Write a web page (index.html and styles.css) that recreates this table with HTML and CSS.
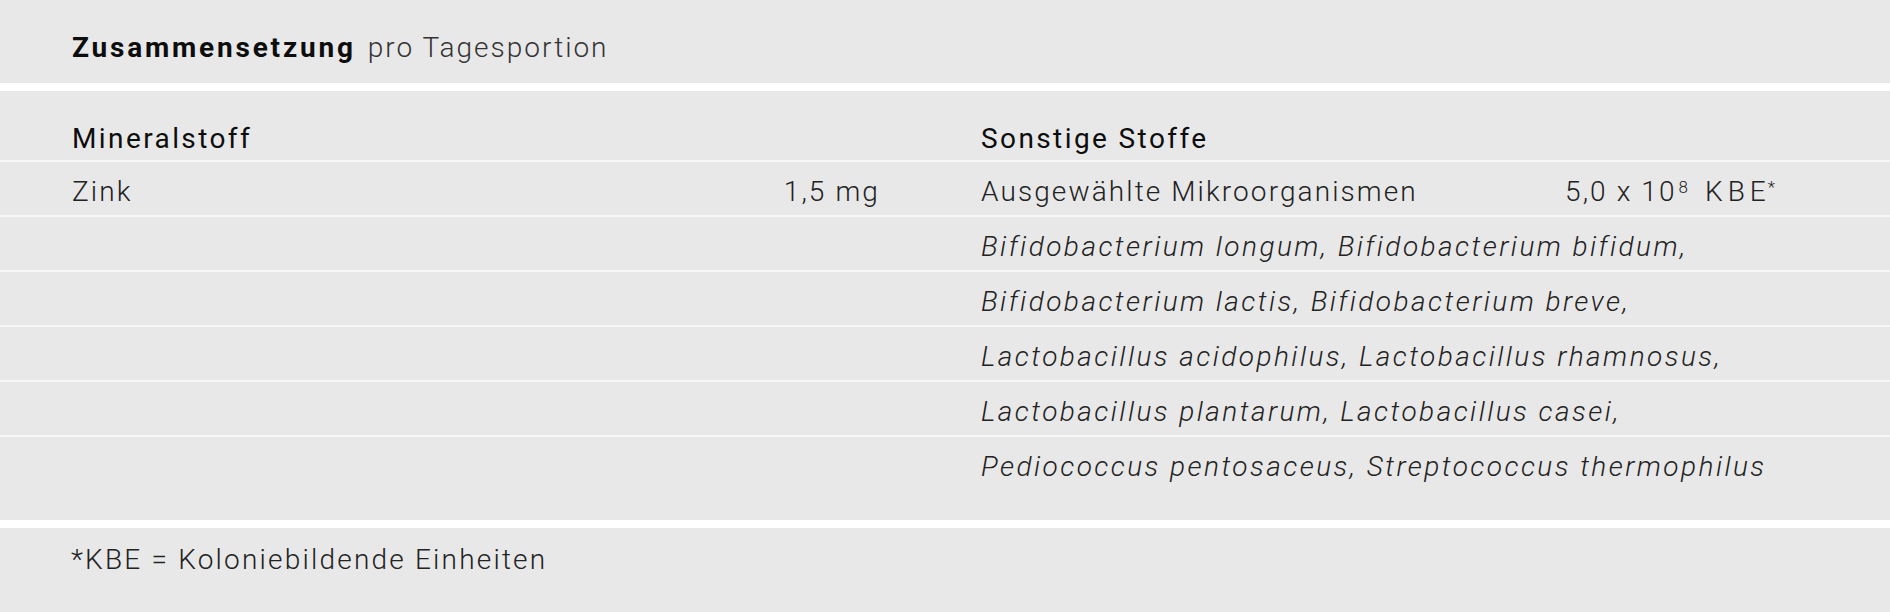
FILE: index.html
```html
<!DOCTYPE html>
<html lang="de">
<head>
<meta charset="utf-8">
<title>Zusammensetzung</title>
<link rel="stylesheet" href="styles.css">
</head>
<body>
<section class="composition">
  <header class="title">
    <h2 class="title-main">Zusammensetzung</h2>
    <span class="title-sub">pro Tagesportion</span>
  </header>
  <div class="table">
    <div class="row row-head">
      <div class="cell">Mineralstoff</div>
      <div class="cell value"></div>
      <div class="cell">Sonstige Stoffe</div>
      <div class="cell"></div>
    </div>
    <div class="row">
      <div class="cell">Zink</div>
      <div class="cell value">1,5 mg</div>
      <div class="cell">Ausgewählte Mikroorganismen</div>
      <div class="cell">5,0 x 10<sup class="exp">8</sup><span class="unit">KBE<sup class="star">*</sup></span></div>
    </div>
    <div class="row">
      <div class="cell"></div>
      <div class="cell value"></div>
      <div class="cell species">Bifidobacterium longum, Bifidobacterium bifidum,</div>
      <div class="cell"></div>
    </div>
    <div class="row">
      <div class="cell"></div>
      <div class="cell value"></div>
      <div class="cell species">Bifidobacterium lactis, Bifidobacterium breve,</div>
      <div class="cell"></div>
    </div>
    <div class="row">
      <div class="cell"></div>
      <div class="cell value"></div>
      <div class="cell species">Lactobacillus acidophilus, Lactobacillus rhamnosus,</div>
      <div class="cell"></div>
    </div>
    <div class="row">
      <div class="cell"></div>
      <div class="cell value"></div>
      <div class="cell species">Lactobacillus plantarum, Lactobacillus casei,</div>
      <div class="cell"></div>
    </div>
    <div class="row row-last">
      <div class="cell"></div>
      <div class="cell value"></div>
      <div class="cell species">Pediococcus pentosaceus, Streptococcus thermophilus</div>
      <div class="cell"></div>
    </div>
  </div>
  <p class="footnote">*KBE = Koloniebildende Einheiten</p>
</section>
</body>
</html>
```
FILE: styles.css
```css
html, body {
  margin: 0;
  padding: 0;
}
body {
  background: #e8e8e8;
  font-family: Roboto, "Liberation Sans", sans-serif;
  color: #1a1a1a;
}
.composition {
  width: 1890px;
  height: 612px;
  overflow: hidden;
}
.title {
  display: flex;
  align-items: baseline;
  gap: 12px;
  box-sizing: border-box;
  height: 91px;
  padding: 31px 0 0 72px;
  border-bottom: 8px solid #ffffff;
}
.title-main {
  margin: 0;
  font-size: 28px;
  line-height: 34px;
  font-weight: 700;
  letter-spacing: 2.8px;
  color: #0d0d0d;
}
.title-sub {
  font-size: 28px;
  line-height: 34px;
  font-weight: 300;
  letter-spacing: 2px;
  color: #333;
}
.table {
  box-sizing: border-box;
  height: 437px;
  border-bottom: 8px solid #ffffff;
}
.row {
  display: grid;
  grid-template-columns: 706px 203px 584px 1fr;
  box-sizing: border-box;
  height: 55px;
  padding: 13px 0 6px 72px;
  border-bottom: 2px solid #f7f7f7;
  font-size: 28px;
  line-height: 34px;
  font-weight: 300;
  letter-spacing: 2.1px;
  color: #222;
}
.row-head {
  height: 71px;
  padding-top: 0;
  padding-bottom: 4px;
  align-items: end;
  font-weight: 400;
  letter-spacing: 2.4px;
  color: #0d0d0d;
}
.row-last {
  border-bottom: 0;
}
.cell {
  white-space: nowrap;
}
.value {
  text-align: right;
  padding-right: 101px;
}
.species {
  font-style: italic;
  letter-spacing: 2.45px;
}
.exp {
  font-size: 17px;
  line-height: 0;
  vertical-align: 8px;
  margin-left: 2px;
  letter-spacing: 0;
}
.unit {
  margin-left: 17px;
  letter-spacing: 5px;
}
.star {
  font-size: 17px;
  line-height: 0;
  vertical-align: 8px;
  letter-spacing: 0;
  margin-left: -3px;
}
.footnote {
  margin: 0;
  padding: 15px 0 0 71px;
  font-size: 28px;
  line-height: 34px;
  font-weight: 300;
  letter-spacing: 2.2px;
  color: #222;
}
```
